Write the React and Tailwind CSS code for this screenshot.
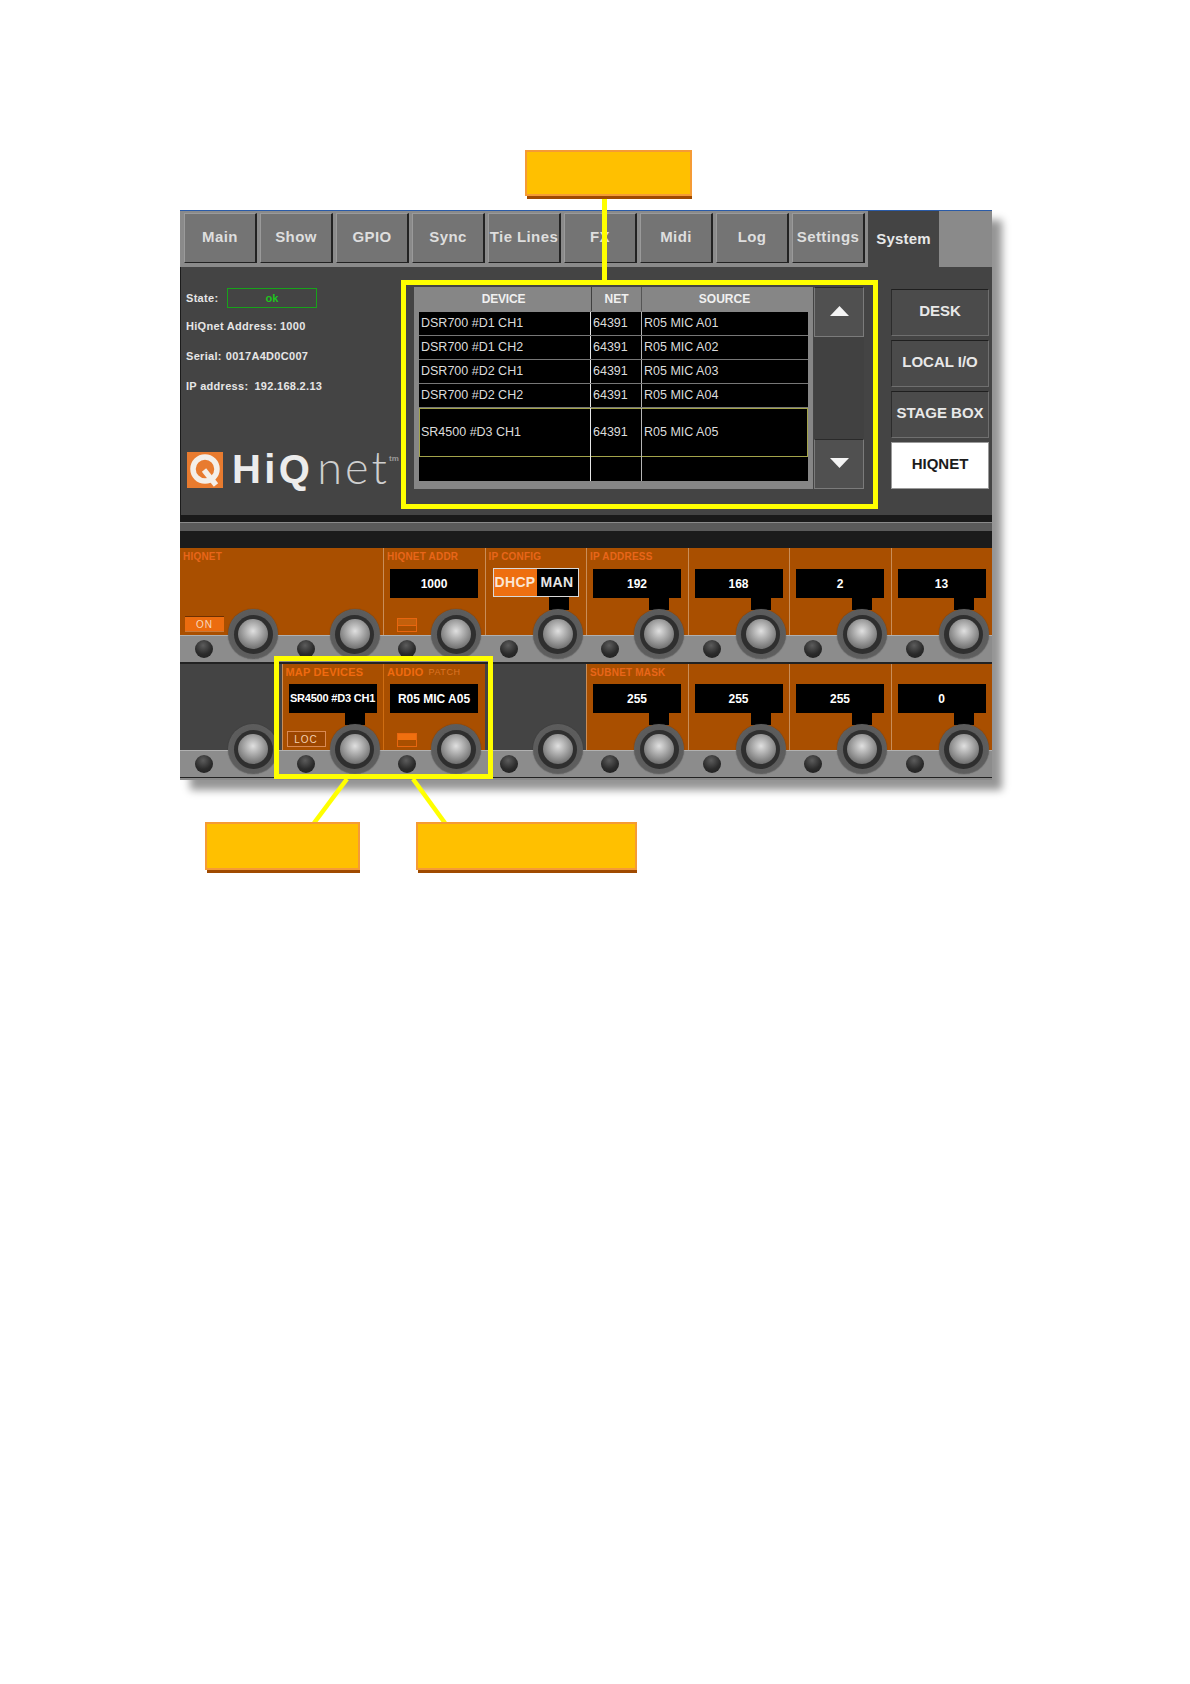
const tabs = ["Main", "Show", "GPIO", "Sync", "Tie Lines", "FX", "Midi", "Log", "Settings"];
const rows = [
  ["DSR700 #D1 CH1", "64391", "R05 MIC A01"],
  ["DSR700 #D1 CH2", "64391", "R05 MIC A02"],
  ["DSR700 #D2 CH1", "64391", "R05 MIC A03"],
  ["DSR700 #D2 CH2", "64391", "R05 MIC A04"],
];

function Knob() {
  return (
    <div className="absolute left-[48px] bottom-[3px] w-[50px] h-[50px] rounded-full z-10 flex items-center justify-center bg-[radial-gradient(circle_at_50%_45%,#555_0%,#5e5e5e_70%,#757575_88%,#5a5a5a_100%)] shadow-[0_0_1px_#333]">
      <div className="w-[39px] h-[39px] rounded-full bg-[#2f2f2f] flex items-center justify-center">
        <div className="w-[30px] h-[30px] rounded-full bg-[radial-gradient(circle_at_50%_40%,#e0e0e0_0%,#b4b4b4_30%,#7c7c7c_68%,#4e4e4e_100%)]" />
      </div>
    </div>
  );
}

function Strip() {
  return (
    <div className="h-[27px] pb-[1px] bg-[#8c8c8c] border-t border-t-[#b0b0b0] flex items-center pl-[15px]">
      <div className="w-[18px] h-[18px] rounded-full bg-[radial-gradient(circle_at_45%_30%,#5c5c5c_0%,#2b2b2b_55%,#1c1c1c_100%)]" />
    </div>
  );
}

function Display({ text, size = "text-[12px]", stem = true, className = "" }) {
  return (
    <div className={`relative ml-[6px] w-[88px] h-[29px] bg-black flex items-center justify-center ${className}`}>
      <span className={`${size} font-bold text-white font-['Liberation_Sans',sans-serif] whitespace-nowrap`}>{text}</span>
      {stem && <div className="absolute left-[56px] top-[29px] w-[20px] h-[12px] bg-black" />}
    </div>
  );
}

function Toggle({ on }) {
  return (
    <div className="absolute left-[13px] bottom-[3px] w-[20px] h-[14px] border border-[#e8660f] flex flex-col">
      <div className={on ? "h-[6px] bg-[#f0700f]" : "h-[7px] bg-[#c2600c] border-b border-[#e8660f]"} />
    </div>
  );
}

function Label({ children, className = "" }) {
  return (
    <div className={`h-[20px] pl-[3px] pb-[3px] flex items-center text-[10px] font-bold text-[#e8661a] tracking-[0.2px] font-['Liberation_Sans',sans-serif] whitespace-nowrap ${className}`}>
      {children}
    </div>
  );
}

function Cell({ h, dark, noDivider, children, softDivider }) {
  const bg = dark ? "bg-[#444444]" : "bg-[#a94f00]";
  const div = noDivider || dark ? "" : softDivider ? "border-l border-l-[#cf6d12]" : "border-l border-l-[#c98d58]";
  return (
    <div className="relative flex flex-col">
      <div className={`relative ${h} ${bg} ${div}`}>{children}</div>
      <Strip />
      <Knob />
    </div>
  );
}

function Row1() {
  const h = "h-[87px]";
  return (
    <div className="grid grid-cols-8">
      <Cell h={h} noDivider>
        <Label>HIQNET</Label>
        <div className="absolute left-[5px] bottom-[3px] w-[39px] h-[16px] bg-[#ec6c0f] border-t border-t-[#6e3000] border-b border-b-[#c97a3a] flex items-center justify-center text-[10px] tracking-[1px] text-[#f7d8bd] font-['Liberation_Sans',sans-serif]">ON</div>
      </Cell>
      <Cell h={h} noDivider />
      <Cell h={h}>
        <Label>HIQNET ADDR</Label>
        <Display text="1000" stem={false} className="mt-[1px]" />
        <Toggle />
      </Cell>
      <Cell h={h}>
        <Label>IP CONFIG</Label>
        <div className="relative ml-[7px] w-[86px] h-[29px] flex border border-[#d9d9d9] bg-black text-[14px] font-bold tracking-[0.3px] font-['Liberation_Sans',sans-serif]">
          <div className="w-[43px] bg-[#ee6f10] text-[#fbe6d4] flex items-center justify-center">DHCP</div>
          <div className="flex-1 text-[#e6e6e6] flex items-center justify-center">MAN</div>
          <div className="absolute left-[55px] top-[28px] w-[20px] h-[13px] bg-black" />
        </div>
      </Cell>
      {["192", "168", "2", "13"].map((v, i) => (
        <Cell h={h} key={v}>
          <Label>{i === 0 ? "IP ADDRESS" : ""}</Label>
          <Display text={v} className="mt-[1px]" />
        </Cell>
      ))}
    </div>
  );
}

function Row2() {
  const h = "h-[86px]";
  return (
    <div className="grid grid-cols-8">
      <Cell h={h} dark />
      <Cell h={h}>
        <Label className="text-[11px] !text-[#ef6a10]">MAP DEVICES</Label>
        <Display text="SR4500 #D3 CH1" size="text-[11px] tracking-[-0.2px]" />
        <div className="absolute left-[4px] bottom-[3px] w-[39px] h-[16px] bg-[#9c4600] border border-[#d98a55] flex items-center justify-center text-[10px] tracking-[1px] text-[#f3cfae] font-['Liberation_Sans',sans-serif]">LOC</div>
      </Cell>
      <Cell h={h} softDivider>
        <Label className="text-[11px] !text-[#ef6a10]">
          AUDIO<span className="ml-[5px] text-[9px] font-normal tracking-[0.6px] text-[#dd7424]">PATCH</span>
        </Label>
        <Display text="R05 MIC A05" stem={false} />
        <Toggle on />
      </Cell>
      <Cell h={h} dark />
      {["255", "255", "255", "0"].map((v, i) => (
        <Cell h={h} key={i}>
          <Label>{i === 0 ? "SUBNET MASK" : ""}</Label>
          <Display text={v} />
        </Cell>
      ))}
    </div>
  );
}

function Arrow({ down }) {
  return (
    <svg width="19" height="10" viewBox="0 0 19 10">
      <polygon points={down ? "0,0 19,0 9.5,10" : "0,10 19,10 9.5,0"} fill="#f4f4f4" />
    </svg>
  );
}

function TableRow({ cells, selected, last }) {
  const frame = selected
    ? "h-[49px] shadow-[inset_0_0_0_1px_#a3a34a]"
    : last
    ? "h-[24px]"
    : "h-[24px] border-b border-b-[#777777]";
  return (
    <div className={`flex items-stretch ${frame} text-[12.5px] text-[#dcdcdc] font-['Liberation_Sans',sans-serif]`}>
      <div className="w-[172px] shrink-0 pl-[2px] flex items-center border-r border-r-[#e6e6e6]">{cells[0]}</div>
      <div className="w-[51px] shrink-0 pl-[2px] flex items-center border-r border-r-[#b5b5b5]">{cells[1]}</div>
      <div className="flex-1 pl-[2px] flex items-center">{cells[2]}</div>
    </div>
  );
}

function SideButton({ children, active }) {
  return (
    <div
      className={
        active
          ? "h-[47px] pb-[2px] bg-white text-[#1c1c1c] flex items-center justify-center border border-[#9a9a9a]"
          : "h-[47px] pb-[2px] bg-[#4b4b4b] text-[#e8e8e8] flex items-center justify-center border border-[#6f6f6f] border-t-[#1f1f1f] border-l-[#2c2c2c]"
      }
    >
      {children}
    </div>
  );
}

export default function App() {
  const info = "text-[11px] font-bold tracking-[0.3px] text-[#e6e6e6] whitespace-nowrap";
  return (
    <div className="relative h-[1684px] bg-white pt-[210px] pl-[180px] overflow-hidden font-['Liberation_Sans',sans-serif]">
      {/* panel */}
      <div className="w-[812px] h-[570px] bg-[#444444] border-t border-t-[#2a5ba8] shadow-[10px_10px_8px_rgba(0,0,0,0.42)] flex flex-col">
        {/* tabs */}
        <div className="h-[56px] bg-[#8a8a8a] flex items-start pl-[4px] pt-[2px] gap-[3px]">
          {tabs.map((t) => (
            <div
              key={t}
              className="w-[73px] h-[50px] pb-[2px] bg-[#747474] border-t border-l border-t-[#9a9a9a] border-l-[#9a9a9a] border-r-2 border-r-[#222222] border-b border-b-[#222222] flex items-center justify-center text-[15px] font-bold tracking-[0.4px] text-[#dedede] whitespace-nowrap"
            >
              {t}
            </div>
          ))}
          <div className="w-[71px] h-[56px] -mt-[2px] bg-[#444444] flex items-center justify-center text-[15px] font-bold tracking-[0.2px] text-[#e8e8e8]">
            System
          </div>
        </div>

        {/* middle */}
        <div className="h-[248px] flex border-l border-l-[#1c1c1c]">
          <div className="w-[220px] shrink-0 pl-[5px] pt-[21px]">
            <div className="h-[20px] flex items-center">
              <span className={`${info} w-[41px]`}>State:</span>
              <div className="w-[90px] h-[20px] border border-[#17a31a] flex items-center justify-center text-[11px] font-bold text-[#1fc41f]">ok</div>
            </div>
            <div className={`${info} mt-[11px] h-[14px] leading-[14px]`}>
              HiQnet Address:<span className="ml-[3px]">1000</span>
            </div>
            <div className={`${info} mt-[16px] h-[14px] leading-[14px]`}>
              Serial:<span className="ml-[4px]">0017A4D0C007</span>
            </div>
            <div className={`${info} mt-[16px] h-[14px] leading-[14px]`}>
              IP address:<span className="ml-[6px]">192.168.2.13</span>
            </div>
            <div className="mt-[59px] flex items-center relative h-[36px] ml-[1px]">
              <svg width="36" height="36" viewBox="0 0 36 36" className="shrink-0">
                <rect width="36" height="36" fill="#e87b2f" />
                <circle cx="18" cy="17" r="12" fill="none" stroke="#f4efe9" strokeWidth="5.5" />
                <line x1="17" y1="18" x2="29" y2="33" stroke="#f4efe9" strokeWidth="5.5" />
              </svg>
              <span className="ml-[9px] -mt-[3px] text-[40px] leading-none font-bold tracking-[3.4px] text-[#ececec] font-['Liberation_Sans',sans-serif]">HiQ</span>
              <span className="ml-[4px] -mt-[6px] text-[45px] leading-none font-light tracking-[3px] text-[#cfcfcf] font-['Lato','Open_Sans',sans-serif]">net</span>
              <span className="absolute left-[202px] top-[1px] text-[8px] font-bold text-[#9a9a9a]">tm</span>
            </div>
          </div>

          <div className="mt-[13px] w-[477px] h-[229px] shrink-0 border-[5px] border-[#ffff00] pl-[8px] pt-[2px] flex">
            <div className="w-[399px] h-[202px] bg-[#868686] flex flex-col">
              <div className="h-[25px] pb-[1px] flex text-[12px] font-bold text-[#f0f0f0]">
                <div className="w-[178px] flex items-center justify-center border-r border-r-[#3f3f3f] tracking-[-0.2px] pl-[2px]">DEVICE</div>
                <div className="w-[50px] flex items-center justify-center border-r border-r-[#555555]">NET</div>
                <div className="flex-1 flex items-center justify-center pr-[6px]">SOURCE</div>
              </div>
              <div className="mx-[5px] h-[169px] bg-black">
                {rows.map((r) => (
                  <TableRow key={r[0]} cells={r} />
                ))}
                <TableRow cells={["SR4500 #D3 CH1", "64391", "R05 MIC A05"]} selected />
                <TableRow cells={["", "", ""]} last />
              </div>
            </div>
            <div className="ml-[1px] w-[50px] h-[202px] flex flex-col">
              <div className="h-[50px] bg-[#505050] border border-[#7b7b7b] border-t-[#2a2a2a] flex items-center justify-center pb-[2px]">
                <Arrow />
              </div>
              <div className="flex-1 bg-[#414141]" />
              <div className="h-[50px] bg-[#505050] border border-[#7b7b7b] border-t-[#2a2a2a] flex items-center justify-center pb-[2px]">
                <Arrow down />
              </div>
            </div>
          </div>

          <div className="ml-[13px] mt-[22px] w-[98px] flex flex-col gap-[4px] text-[15px] font-bold">
            <SideButton>DESK</SideButton>
            <SideButton>LOCAL I/O</SideButton>
            <SideButton>STAGE BOX</SideButton>
            <SideButton active>HIQNET</SideButton>
          </div>
        </div>

        {/* divider bands */}
        <div className="h-[7px] bg-[#1a1a1a]" />
        <div className="h-[9px] bg-[#5a5a5a] border-t border-t-[#8a8a8a]" />
        <div className="h-[17px] bg-[#1b1b1b]" />

        {/* encoders */}
        <Row1 />
        <div className="h-[2px] bg-[#222222]" />
        <Row2 />
        <div className="flex-1 bg-[#8a8a8a] border-t border-t-[#222222]" />
      </div>

      {/* annotations */}
      <div className="absolute left-[602px] top-[196px] w-[5px] h-[85px] bg-[#ffff00]" />
      <svg className="absolute left-[300px] top-[778px]" width="160" height="46" viewBox="0 0 160 46">
        <line x1="47" y1="1" x2="14" y2="45" stroke="#ffff00" strokeWidth="4.5" />
        <line x1="113" y1="1" x2="145" y2="45" stroke="#ffff00" strokeWidth="4.5" />
      </svg>
      <div className="absolute left-[274px] top-[656px] w-[219px] h-[123px] border-[5px] border-[#ffff00] z-20 pointer-events-none" />
      <div className="absolute left-[525px] top-[150px] w-[167px] h-[46px] bg-[#ffc000] border-2 border-[#f59b35] shadow-[1px_4px_0_-1px_#a04a00]" />
      <div className="absolute left-[205px] top-[822px] w-[155px] h-[48px] bg-[#ffc000] border-2 border-[#f59b35] shadow-[1px_4px_0_-1px_#a04a00]" />
      <div className="absolute left-[416px] top-[822px] w-[221px] h-[48px] bg-[#ffc000] border-2 border-[#f59b35] shadow-[1px_4px_0_-1px_#a04a00]" />
    </div>
  );
}
